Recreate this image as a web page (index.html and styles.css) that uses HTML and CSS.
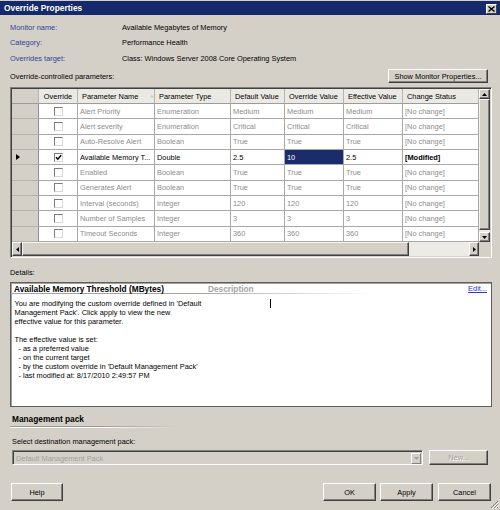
FILE: index.html
```html
<!DOCTYPE html>
<html>
<head>
<meta charset="utf-8">
<link rel="stylesheet" href="styles.css">
</head>
<body>
<div class="window">
  <div class="titlebar">
    <span class="title">Override Properties</span>
    <span class="close"><svg width="7" height="6" viewBox="0 0 7 6"><path d="M0.5 0.5 L6.5 5.5 M6.5 0.5 L0.5 5.5" stroke="#000" stroke-width="1.4"/></svg></span>
  </div>
  <div class="content">
    <div class="info">
      <span class="lbl">Monitor name:</span><span>Available Megabytes of Memory</span>
      <span class="lbl">Category:</span><span>Performance Health</span>
      <span class="lbl">Overrides target:</span><span>Class: Windows Server 2008 Core Operating System</span>
    </div>
    <div class="paramsbar">
      <span>Override-controlled parameters:</span>
      <span class="btn showbtn">Show Monitor Properties...</span>
    </div>
    <div class="grid">
      <div class="gridmain">
        <div class="table">
          <div class="row head">
            <div class="c rh"></div>
            <div class="c center">Override</div>
            <div class="c">Parameter Name<svg class="sort" width="5" height="4" viewBox="0 0 5 4"><path d="M2.5 0 L5 4 L0 4 Z" fill="#c8c8c8"/></svg></div>
            <div class="c">Parameter Type</div>
            <div class="c">Default Value</div>
            <div class="c">Override Value</div>
            <div class="c">Effective Value</div>
            <div class="c">Change Status</div>
          </div>
          <div class="row">
            <div class="c rh"></div><div class="c center"><span class="cb"></span></div>
            <div class="c">Alert Priority</div><div class="c">Enumeration</div><div class="c">Medium</div><div class="c">Medium</div><div class="c">Medium</div><div class="c">[No change]</div>
          </div>
          <div class="row">
            <div class="c rh"></div><div class="c center"><span class="cb"></span></div>
            <div class="c">Alert severity</div><div class="c">Enumeration</div><div class="c">Critical</div><div class="c">Critical</div><div class="c">Critical</div><div class="c">[No change]</div>
          </div>
          <div class="row">
            <div class="c rh"></div><div class="c center"><span class="cb"></span></div>
            <div class="c">Auto-Resolve Alert</div><div class="c">Boolean</div><div class="c">True</div><div class="c">True</div><div class="c">True</div><div class="c">[No change]</div>
          </div>
          <div class="row sel">
            <div class="c rh"><svg width="4" height="6" viewBox="0 0 4 6"><path d="M0 0 L4 3 L0 6 Z" fill="#000"/></svg></div>
            <div class="c center"><span class="cb"><svg width="7" height="7" viewBox="0 0 7 7"><path d="M1 3.2 L2.8 5.2 L6.2 1.2" stroke="#000" stroke-width="1.4" fill="none"/></svg></span></div>
            <div class="c">Available Memory T...</div><div class="c">Double</div><div class="c">2.5</div><div class="c hl">10</div><div class="c">2.5</div><div class="c bold">[Modified]</div>
          </div>
          <div class="row">
            <div class="c rh"></div><div class="c center"><span class="cb"></span></div>
            <div class="c">Enabled</div><div class="c">Boolean</div><div class="c">True</div><div class="c">True</div><div class="c">True</div><div class="c">[No change]</div>
          </div>
          <div class="row">
            <div class="c rh"></div><div class="c center"><span class="cb"></span></div>
            <div class="c">Generates Alert</div><div class="c">Boolean</div><div class="c">True</div><div class="c">True</div><div class="c">True</div><div class="c">[No change]</div>
          </div>
          <div class="row">
            <div class="c rh"></div><div class="c center"><span class="cb"></span></div>
            <div class="c">Interval (seconds)</div><div class="c">Integer</div><div class="c">120</div><div class="c">120</div><div class="c">120</div><div class="c">[No change]</div>
          </div>
          <div class="row">
            <div class="c rh"></div><div class="c center"><span class="cb"></span></div>
            <div class="c">Number of Samples</div><div class="c">Integer</div><div class="c">3</div><div class="c">3</div><div class="c">3</div><div class="c">[No change]</div>
          </div>
          <div class="row">
            <div class="c rh"></div><div class="c center"><span class="cb"></span></div>
            <div class="c">Timeout Seconds</div><div class="c">Integer</div><div class="c">360</div><div class="c">360</div><div class="c">360</div><div class="c">[No change]</div>
          </div>
        </div>
        <div class="vscroll">
          <span class="sbtn"><svg width="5" height="3" viewBox="0 0 5 3"><path d="M2.5 0 L5 3 L0 3 Z" fill="#000"/></svg></span>
          <span class="vthumb"></span>
          <span class="sbtn"><svg width="5" height="3" viewBox="0 0 5 3"><path d="M0 0 L5 0 L2.5 3 Z" fill="#000"/></svg></span>
        </div>
      </div>
      <div class="hscroll">
        <span class="sbtn"><svg width="3" height="5" viewBox="0 0 3 5"><path d="M3 0 L3 5 L0 2.5 Z" fill="#000"/></svg></span>
        <span class="hthumb"></span>
        <span class="htrack"></span>
        <span class="sbtn"><svg width="3" height="5" viewBox="0 0 3 5"><path d="M0 0 L3 2.5 L0 5 Z" fill="#000"/></svg></span>
        <span class="corner"></span>
      </div>
    </div>

    <div class="detlabel">Details:</div>
    <div class="details">
      <div class="dhead">
        <span class="dtitle">Available Memory Threshold (MBytes)</span>
        <span class="ddesc">Description</span>
        <span class="edit">Edit...</span>
      </div>
      <div class="dbody">
        <div class="dtext">
          <div>You are modifying the custom override defined in 'Default</div>
          <div>Management Pack'. Click apply to view the new</div>
          <div>effective value for this parameter.</div>
          <div class="blank"></div>
          <div>The effective value is set:</div>
          <div class="ind">- as a preferred value</div>
          <div class="ind">- on the current target</div>
          <div class="ind">- by the custom override in 'Default Management Pack'</div>
          <div class="ind">- last modified at: 8/17/2010 2:49:57 PM</div>
        </div>
        <div class="dpane"><span class="caret"></span></div>
      </div>
    </div>

    <div class="mp">
      <div class="mptitle">Management pack</div>
      <div class="sep"></div>
      <div class="sellabel">Select destination management pack:</div>
      <div class="comborow">
        <div class="combo">
          <span class="combotext">Default Management Pack</span>
          <span class="dropbtn"><svg width="5" height="3" viewBox="0 0 5 3"><path d="M0 0 L5 0 L2.5 3 Z" fill="#a0a0a0"/></svg></span>
        </div>
        <span class="btn newbtn">New...</span>
      </div>
    </div>

    <div class="btnrow">
      <span class="btn help">Help</span>
      <span class="spacer"></span>
      <span class="btn act">OK</span>
      <span class="btn act apply">Apply</span>
      <span class="btn act cancel">Cancel</span>
    </div>
  </div>
  <svg class="grip" width="10" height="10" viewBox="0 0 10 10">
    <path d="M9 2 L2 9 M9 5 L5 9 M9 8 L8 9" stroke="#808080" stroke-width="1"/>
    <path d="M10 3 L3 10 M10 6 L6 10" stroke="#fff" stroke-width="1"/>
  </svg>
</div>
</body>
</html>
```
FILE: styles.css
```css
* { box-sizing: border-box; margin: 0; padding: 0; }
html, body { margin: 0; background: #d4d0c8; }
body {
  font-family: "Liberation Sans", Arial, sans-serif;
  font-size: 7.4px;
  color: #000;
}
.window {
  width: 500px;
  height: 510px;
  position: relative;
  background: #d4d0c8;
  padding-top: 1px;
  overflow: hidden;
}
.titlebar {
  height: 14px;
  background: #142a6c;
  display: flex;
  align-items: center;
  justify-content: space-between;
  padding: 0 3px 0 4px;
}
.title { color: #fff; font-weight: bold; font-size: 8.4px; }
.close {
  width: 11px;
  height: 10px;
  margin-top: 2px;
  background: #d4d0c8;
  border: 1px solid;
  border-color: #fff #404040 #404040 #fff;
  display: flex;
  align-items: center;
  justify-content: center;
}
.close svg { display: block; }

.content { padding: 0 8px 0 10px; }
.info {
  display: grid;
  grid-template-columns: 112px 1fr;
  grid-auto-rows: 15.5px;
  align-items: center;
  margin-top: 4.5px;
}
.lbl { color: #2f4595; }
.paramsbar {
  display: flex;
  justify-content: space-between;
  align-items: center;
  height: 14px;
  margin-top: 3px;
}
.btn {
  background: #d4d0c8;
  border: 1px solid;
  border-color: #fff #404040 #404040 #fff;
  box-shadow: inset -1px -1px #808080;
  color: #000;
  display: flex;
  align-items: center;
  justify-content: center;
  white-space: nowrap;
}
.showbtn { width: 100px; height: 14px; margin-right: 4px; }

/* grid */
.grid {
  margin-top: 4px;
  height: 171px;
  border: 1px solid;
  border-color: #808080 #fff #fff #808080;
  box-shadow: inset 1px 1px #404040, inset -1px -1px #d4d0c8;
  padding: 1px;
  background: #fff;
  display: flex;
  flex-direction: column;
}
.gridmain { display: flex; height: 153px; }
.table {
  display: grid;
  grid-template-columns: 27px 39px 77px 76px 54px 59px 59px 76px;
  grid-template-rows: 15px repeat(9, 15.333px);
  flex: none;
}
.row { display: contents; }
.c {
  border-right: 1px solid #a8a8a8;
  border-bottom: 1px solid #a8a8a8;
  padding-left: 2px;
  display: flex;
  align-items: center;
  white-space: nowrap;
  overflow: hidden;
  color: #8c8c8c;
  background: #fff;
}
.c.center { justify-content: center; padding-left: 0; }
.c.rh {
  background: #d4d0c8;
  border-right: 1px solid #909090;
  border-bottom: 1px solid #b8b4ac;
  padding-left: 4px;
}
.head .c {
  background: #ebe9e4;
  color: #000;
  padding-left: 4px;
  border-right: 1px solid #b4b4b4;
  border-bottom: 1px solid #9c9c9c;
}
.head .c.center { padding-left: 0; }
.head .c.rh { background: #d4d0c8; }
.sort { margin-left: 12px; }
.sel .c { color: #000; }
.sel .c.hl { background: #1b2c6d; color: #fff; }
.sel .c.bold { font-weight: bold; }
.cb {
  width: 9px;
  height: 9px;
  background: #fff;
  border: 1px solid;
  border-color: #7c7c7c #d8d8d8 #d8d8d8 #7c7c7c;
  display: flex;
  align-items: center;
  justify-content: center;
}
.cb svg { display: block; }

.vscroll {
  flex: 1;
  display: flex;
  flex-direction: column;
  background: #ecebe6;
}
.sbtn {
  background: #d4d0c8;
  border: 1px solid;
  border-color: #fff #404040 #404040 #fff;
  box-shadow: inset -1px -1px #808080;
  display: flex;
  align-items: center;
  justify-content: center;
  flex: none;
}
.vscroll .sbtn { height: 10px; }
.vthumb {
  flex: 1;
  background: #d4d0c8;
  border: 1px solid;
  border-color: #f4f4f4 #404040 #404040 #f4f4f4;
  box-shadow: inset -1px -1px #808080;
  margin-bottom: 2px;
}
.hscroll {
  height: 14px;
  display: flex;
  background: #ecebe6;
  align-items: stretch;
}
.hscroll .sbtn { width: 10px; }
.hthumb {
  width: 387px;
  background: #d4d0c8;
  border: 1px solid;
  border-color: #f4f4f4 #404040 #404040 #f4f4f4;
  box-shadow: inset -1px -1px #808080;
}
.htrack { flex: 1; }
.corner { width: 11px; background: #d4d0c8; }

/* details */
.detlabel { margin-top: 10px; height: 10px; line-height: 10px; }
.details {
  margin-top: 4px;
  height: 125px;
  border: 1px solid #5e5e5e;
  background: #fff;
  box-shadow: inset 1px 1px #a0a0a0;
}
.dhead {
  height: 11px;
  display: flex;
  align-items: center;
  padding: 0 4px 0 3px;
  background: linear-gradient(to right, #a4a4a4 0, #a4a4a4 52%, rgba(164,164,164,0) 100%) left bottom / 362px 1px no-repeat;
}
.dtitle { width: 194px; font-weight: bold; font-size: 8.3px; }
.ddesc { flex: 1; font-weight: bold; font-size: 8.3px; color: #a4a4a4; }
.edit { color: #2838b8; text-decoration: underline; }
.dbody {
  display: flex;
  padding: 4.5px 0 0 3.5px;
  line-height: 9px;
}
.dtext { width: 194px; white-space: nowrap; }
.blank { height: 9px; }
.ind { padding-left: 4px; }
.dpane { padding-left: 61px; }
.caret { display: block; width: 1px; height: 9px; background: #000; }

/* management pack */
.mp { padding-left: 2px; }
.mptitle { margin-top: 7px; height: 10px; line-height: 10px; font-weight: bold; font-size: 8.3px; }
.sep {
  margin-top: 2px;
  margin-left: -2px;
  width: 168px;
  height: 2px;
  background-image: linear-gradient(to right, #9a9a9a 55%, rgba(154,154,154,0)), linear-gradient(to right, #fff 55%, rgba(255,255,255,0));
  background-size: 100% 1px, 100% 1px;
  background-position: 0 0, 0 1px;
  background-repeat: no-repeat;
}
.sellabel { margin-top: 9px; height: 10px; line-height: 10px; }
.comborow { display: flex; margin-top: 3px; height: 15px; }
.combo {
  width: 411px;
  height: 15px;
  display: flex;
  align-items: center;
  justify-content: space-between;
  border: 1px solid;
  border-color: #808080 #fff #fff #808080;
  box-shadow: inset 1px 1px #404040;
  padding: 2px 1px 1px 3px;
  background: #d4d0c8;
}
.combotext { color: #a0a0a0; }
.dropbtn {
  width: 10px;
  height: 11px;
  background: #d4d0c8;
  border: 1px solid;
  border-color: #fff #808080 #808080 #fff;
  display: flex;
  align-items: center;
  justify-content: center;
}
.newbtn { width: 59px; height: 15px; margin-left: 6px; color: #a0a0a0; text-shadow: 1px 1px #fff; }

.btnrow { display: flex; margin-top: 18px; height: 18px; }
.help { width: 52px; margin-left: 1px; }
.spacer { flex: 1; }
.act { width: 53px; }
.apply { margin-left: 4px; }
.cancel { margin-left: 5px; margin-right: 1px; }

.grip { position: absolute; right: 1px; bottom: 1px; }
```
